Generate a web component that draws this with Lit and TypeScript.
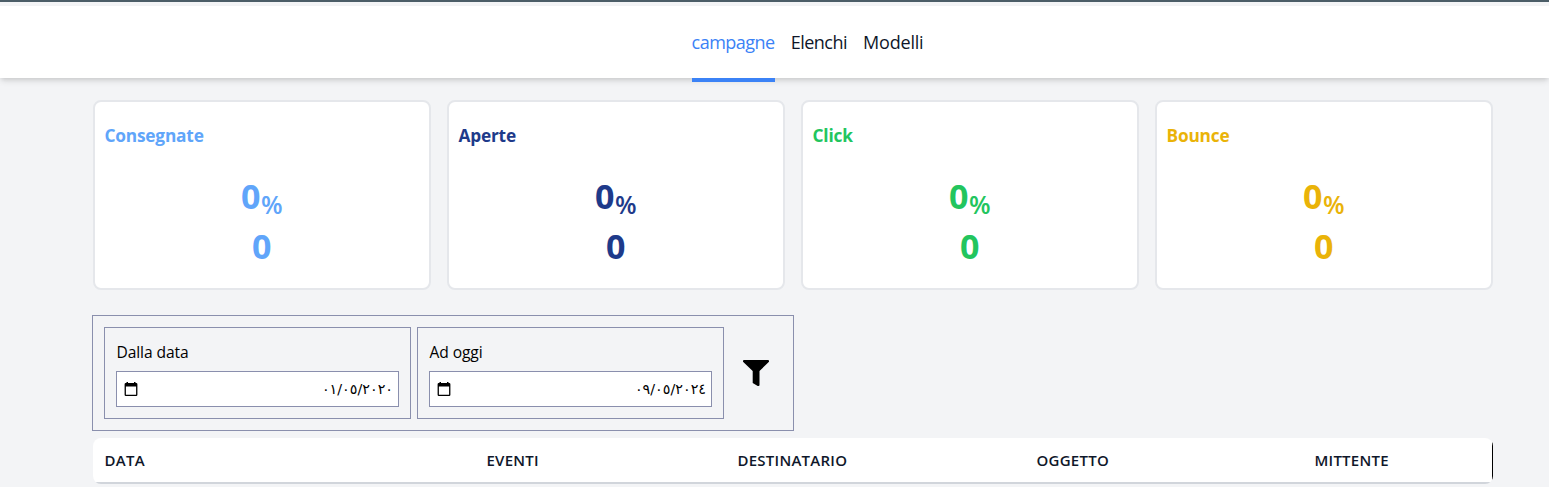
import { LitElement, html, css } from "lit";
import { customElement, property } from "lit/decorators.js";

@customElement("stat-card")
class StatCard extends LitElement {
  @property() label = "";
  @property({ type: Number }) percent = 0;
  @property({ type: Number }) total = 0;

  static styles = css`
    :host { display: block; box-sizing: border-box; height: 190px; padding: 22px 10px 0 9.5px; background: #fff; border: 2px solid #e5e7eb; border-radius: 8px; font-weight: 700; }
    .label { height: 24px; line-height: 24px; font-size: 17.3px; letter-spacing: -0.2px; }
    .rate { display: flex; justify-content: center; margin-top: 23px; height: 50px; line-height: 50px; font-size: 34px; }
    .sign { font-size: 25px; font-weight: 600; line-height: 66px; margin-left: 0.5px; }
    .total { height: 50px; line-height: 50px; text-align: center; font-size: 34px; }
  `;

  render() {
    return html`
      <div class="label">${this.label}</div>
      <div class="rate"><span>${this.percent}</span><span class="sign">%</span></div>
      <div class="total">${this.total}</div>
    `;
  }
}

@customElement("date-field")
class DateField extends LitElement {
  @property() label = "";
  @property() value = "";

  static styles = css`
    :host { display: block; box-sizing: border-box; width: 307px; height: 92px; padding: 11px; border: 1px solid #8a8fad; }
    .label { display: block; height: 32px; line-height: 27px; padding-left: 0.5px; font-size: 15.6px; letter-spacing: -0.1px; color: #000; }
    .box { display: flex; align-items: center; justify-content: space-between; box-sizing: border-box; height: 36px; padding: 0 5px 0 7px; background: #fff; border: 1px solid #8a8fad; }
    .value { direction: ltr; unicode-bidi: bidi-override; font: 14.3px/34px "DejaVu Sans", sans-serif; color: #000; }
    .calendar { display: block; width: 14px; height: 14px; }
  `;

  render() {
    return html`
      <span class="label">${this.label}</span>
      <div class="box">
        <svg class="calendar" viewBox="0 0 14 14">
          <path fill="#000" fill-rule="evenodd" d="M2.5 0H4v1h6V0h1.5v1h.7q1.2 0 1.2 1.2v10.6q0 1.2-1.2 1.2H1.8Q.6 14 .6 12.8V2.2Q.6 1 1.8 1h.7zM1.9 4.5v8.2h10.2V4.5z" />
        </svg>
        <span class="value">${this.value}</span>
      </div>
    `;
  }
}

@customElement("app-root")
class AppRoot extends LitElement {
  static styles = css`
    :host { display: block; box-sizing: border-box; height: 487px; overflow: hidden; background: #f3f4f6; border-top: 2px solid #4b5d67; font-family: "Open Sans", "Noto Sans", sans-serif; color: #0f172a; }
    .nav { display: flex; justify-content: center; gap: 16px; box-sizing: border-box; height: 72px; margin-top: 4px; padding-left: 66px; background: #fff; box-shadow: 0 4px 6px -1px rgba(0, 0, 0, 0.12), 0 2px 4px -1px rgba(0, 0, 0, 0.07); font-size: 18px; line-height: 73px; }
    .tab { box-sizing: border-box; height: 76px; white-space: nowrap; letter-spacing: -0.5px; }
    .tab:last-child { letter-spacing: -0.2px; }
    .active { color: #3b82f6; border-bottom: 4px solid #3b82f6; letter-spacing: -0.52px; }
    .content { width: 1400px; margin: 22px 0 0 93px; }
    .cards { display: grid; grid-template-columns: repeat(4, 1fr); gap: 16px; }
    .delivered { color: #60a5fa; }
    .opened { color: #1e3a8a; }
    .clicked { color: #22c55e; }
    .bounced { color: #eab308; }
    .filters { display: flex; align-items: flex-start; gap: 6px; box-sizing: border-box; width: 702px; height: 116px; margin: 25px 0 0 -1px; padding: 11px; border: 1px solid #8a8fad; }
    .funnel { display: block; width: 26px; height: 26px; margin: 33px 0 0 13px; }
    .table { display: grid; grid-template-columns: 382px 251px 299px 278px 1fr; box-sizing: border-box; height: 46px; margin-top: 7px; padding-left: 11.5px; border-radius: 8px; background: linear-gradient(#d1d5db, #d1d5db) bottom / 100% 2px no-repeat, linear-gradient(#000, #000) right / 1px 100% no-repeat, #fff; font-size: 15px; font-weight: 600; letter-spacing: 0.25px; line-height: 45px; }
  `;

  render() {
    const columns = ["DATA", "EVENTI", "DESTINATARIO", "OGGETTO", "MITTENTE"];
    return html`
      <nav class="nav">
        <span class="tab active">campagne</span>
        <span class="tab">Elenchi</span>
        <span class="tab">Modelli</span>
      </nav>
      <main class="content">
        <section class="cards">
          <stat-card class="delivered" label="Consegnate"></stat-card>
          <stat-card class="opened" label="Aperte"></stat-card>
          <stat-card class="clicked" label="Click"></stat-card>
          <stat-card class="bounced" label="Bounce"></stat-card>
        </section>
        <section class="filters">
          <date-field label="Dalla data" value="٠١/٠٥/٢٠٢٠"></date-field>
          <date-field label="Ad oggi" value="٠٩/٠٥/٢٠٢٤"></date-field>
          <svg class="funnel" viewBox="0 0 26 26">
            <path fill="#000" d="M1 0h24q1 0 1 1v.8L16.5 11V25q0 1-1 1h-.8L9.7 23V11L0 1.8V1q0-1 1-1z" />
          </svg>
        </section>
        <section class="table">${columns.map((name) => html`<span>${name}</span>`)}</section>
      </main>
    `;
  }
}
